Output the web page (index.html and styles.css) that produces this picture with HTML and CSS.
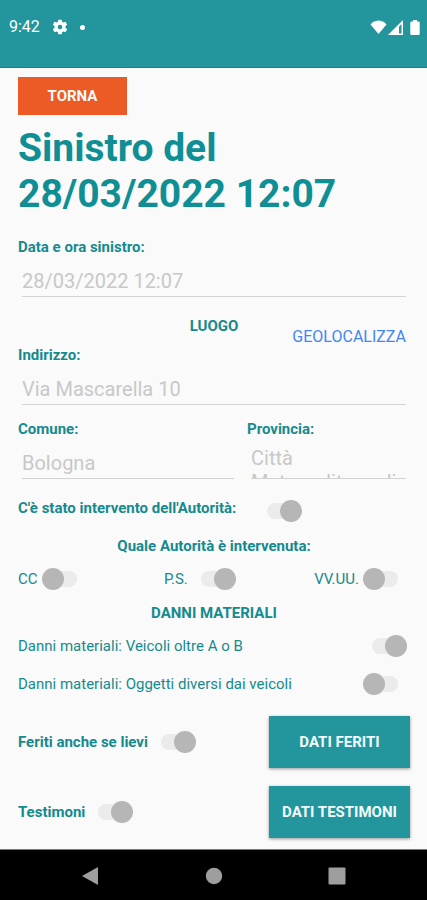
FILE: index.html
```html
<!DOCTYPE html>
<html lang="it">
<head>
    <meta charset="UTF-8">
    <meta name="viewport" content="width=device-width, initial-scale=1.0">
    <title>Sinistro del 28/03/2022 12:07</title>
    <link rel="stylesheet" href="styles.css">
</head>
<body>
    <header class="status-bar">
        <div class="status-left">
            <span>9:42</span>
            <svg width="16" height="16" viewBox="0 0 24 24" fill="#fff"><path d="M9.500 1h5l.6 3.300 1.900 1.100 3.200-1.200 2.500 4.400-2.600 2.100v2.600l2.600 2.100-2.500 4.400-3.200-1.200-1.900 1.100-.6 3.300h-5l-.6-3.300L7 18.600l-3.200 1.200-2.500-4.400 2.600-2.100v-2.600L1.300 8.600l2.500-4.400L7 5.400l1.900-1.100zM12 15.500a3.500 3.500 0 1 0 0-7 3.500 3.500 0 0 0 0 7z" fill-rule="evenodd"/></svg>
            <span class="dot"></span>
        </div>
        <div class="status-right">
            <svg width="17" height="14" viewBox="0 0 17 14" fill="#fff"><path d="M8.500 14 0.500 4.500Q1 3.500 3 2q5.500-3 11 0 2 1.500 2.500 2.500z"/></svg>
            <svg width="15" height="15" viewBox="0 0 15 15"><path d="M0 15 15 0v15z" fill="#fff"/><path d="M11 6.500 13.500 4v9.500H11z" fill="#22969c"/></svg>
            <svg class="battery" width="10" height="15" viewBox="0 0 10 15" fill="#fff"><path d="M3 0h4v1.500h1.500a1.200 1.200 0 0 1 1.200 1.200v11.100A1.200 1.200 0 0 1 8.500 15h-7a1.200 1.200 0 0 1-1.200-1.200V2.700a1.200 1.200 0 0 1 1.200-1.200H3z"/></svg>
        </div>
    </header>

    <main class="form">
        <button class="back-button" type="button">TORNA</button>
        <h1>Sinistro del 28/03/2022 12:07</h1>

        <div class="field">
            <label for="data">Data e ora sinistro:</label>
            <input type="text" id="data" value="28/03/2022 12:07">
        </div>

        <div class="place-header">
            <h2>LUOGO</h2>
            <a href="#">GEOLOCALIZZA</a>
        </div>

        <div class="field">
            <label for="indirizzo">Indirizzo:</label>
            <input type="text" id="indirizzo" value="Via Mascarella 10">
        </div>

        <div class="city-row">
            <div class="field">
                <label for="comune">Comune:</label>
                <input type="text" id="comune" value="Bologna">
            </div>
            <div class="field">
                <label for="provincia">Provincia:</label>
                <textarea id="provincia">Città Metropolitana di Bologna</textarea>
            </div>
        </div>

        <div class="authority">
            <label for="autorita">C'è stato intervento dell'Autorità:</label>
            <input class="switch" type="checkbox" id="autorita" checked>
        </div>

        <h2 class="authority-title">Quale Autorità è intervenuta:</h2>
        <div class="authority-list">
            <label class="option">CC <input class="switch" type="checkbox"></label>
            <label class="option">P.S. <input class="switch" type="checkbox" checked></label>
            <label class="option">VV.UU. <input class="switch" type="checkbox"></label>
        </div>

        <h2 class="damage-title">DANNI MATERIALI</h2>
        <div class="damage-list">
            <label class="option wide">Danni materiali: Veicoli oltre A o B <input class="switch" type="checkbox" checked></label>
            <label class="option wide">Danni materiali: Oggetti diversi dai veicoli <input class="switch" type="checkbox"></label>
        </div>

        <div class="people">
            <div class="people-row">
                <label class="option strong">Feriti anche se lievi <input class="switch" type="checkbox" checked></label>
                <button class="data-button" type="button">DATI FERITI</button>
            </div>
            <div class="people-row">
                <label class="option strong">Testimoni <input class="switch" type="checkbox" checked></label>
                <button class="data-button" type="button">DATI TESTIMONI</button>
            </div>
        </div>
    </main>

    <nav class="nav-bar">
        <button type="button" aria-label="Indietro"><svg width="18" height="18" viewBox="0 0 18 18" fill="#9e9e9e"><path d="M0 9 16 0v18z"/></svg></button>
        <button type="button" aria-label="Home"><svg width="18" height="18" viewBox="0 0 18 18" fill="#9e9e9e"><circle cx="9" cy="9" r="8.200"/></svg></button>
        <button type="button" aria-label="Recenti"><svg width="18" height="18" viewBox="0 0 18 18" fill="#9e9e9e"><rect x=".5" y=".5" width="17" height="17" rx="1"/></svg></button>
    </nav>
</body>
</html>
```
FILE: styles.css
```css
* {
    box-sizing: border-box;
}
body {
    display: flex;
    flex-direction: column;
    min-height: 100vh;
    margin: 0;
    font-family: Roboto, "Liberation Sans", sans-serif;
    font-size: 15px;
    line-height: 20px;
    color: #158a8e;
    background-color: #fafafa;
}
h1, h2 {
    margin: 0;
}
h1 {
    margin-bottom: 20px;
    font-size: 39px;
    font-weight: 700;
    line-height: 46px;
    color: #0f8f94;
}
h2 {
    font-size: 15px;
    font-weight: 700;
    text-align: center;
}
button {
    border: 0;
    padding: 0;
    font-family: inherit;
    font-size: 15px;
    font-weight: 700;
    color: #f4fbfb;
    cursor: pointer;
}

/* Android status bar */
.status-bar {
    display: flex;
    justify-content: space-between;
    height: 68px;
    padding: 17px 7px 0 9px;
    background-color: #22969c;
    border-bottom: 1px solid #15878c;
}
.status-left, .status-right {
    display: flex;
    align-items: center;
    height: 20px;
}
.status-left {
    gap: 12px;
    font-size: 16px;
    line-height: 20px;
    color: #fff;
}
.status-right {
    gap: 1px;
}
.battery {
    margin-left: 6px;
}
.dot {
    width: 5px;
    height: 5px;
    border-radius: 50%;
    background-color: #fff;
}

/* Form */
.form {
    flex: 1;
    padding: 9px 17px 11px 18px;
}
.back-button {
    display: block;
    width: 109px;
    height: 38px;
    margin-bottom: 10px;
    background-color: #ec5a25;
}
.field {
    display: flex;
    flex-direction: column;
    min-width: 0;
}
.field label {
    font-weight: 700;
}
.field input, .field textarea {
    height: 40px;
    margin: 0 4px;
    padding: 12px 0 3px;
    border: 0;
    border-bottom: 1px solid #d2d2d2;
    border-radius: 0;
    outline: 0;
    font-family: inherit;
    font-size: 20px;
    line-height: 24px;
    color: #c8c8c8;
    background-color: transparent;
}
.field input {
    min-width: 0;
}
.field textarea {
    padding: 7px 0 0;
    resize: none;
    overflow: hidden;
}
.place-header {
    display: grid;
    grid-template-columns: 1fr auto 1fr;
    height: 29px;
    margin-top: 19px;
}
.place-header h2 {
    grid-column: 2;
}
.place-header a {
    align-self: end;
    justify-self: end;
    margin-right: 4px;
    font-size: 16px;
    line-height: 16px;
    color: #4285f4;
    text-decoration: none;
}
.city-row {
    display: grid;
    grid-template-columns: 27fr 20fr;
    gap: 9px;
    margin-top: 14px;
}

/* Switches */
.switch {
    appearance: none;
    position: relative;
    flex: none;
    width: 44px;
    height: 22px;
    margin: 0;
}
.switch::before {
    content: "";
    position: absolute;
    top: 3px;
    left: 9px;
    width: 26px;
    height: 16px;
    border-radius: 8px;
    background-color: #ebebeb;
}
.switch::after {
    content: "";
    position: absolute;
    top: 0;
    left: 0;
    width: 22px;
    height: 22px;
    border-radius: 50%;
    background-color: #b6b6b6;
}
.switch:checked::after {
    left: auto;
    right: 0;
}
.option {
    display: flex;
    align-items: center;
    gap: 4px;
}
.wide {
    justify-content: space-between;
}
.strong, .authority label {
    font-weight: 700;
}
.authority {
    display: flex;
    align-items: flex-end;
    gap: 22px;
    margin-top: 19px;
}
.authority label {
    padding-bottom: 4px;
}
.authority-title {
    margin-top: 14px;
}
.authority-list {
    display: flex;
    justify-content: space-between;
    margin: 12px 3px 13px 0;
}
.damage-list {
    display: flex;
    flex-direction: column;
    gap: 16px;
    margin: 12px 3px 21px 0;
}
.people {
    display: flex;
    flex-direction: column;
    gap: 18px;
}
.people-row {
    display: flex;
    align-items: center;
    justify-content: space-between;
}
.data-button {
    width: 141px;
    height: 52px;
    background-color: #22969c;
    box-shadow: 0 1px 3px rgba(0, 0, 0, 0.4);
}

/* Android navigation bar */
.nav-bar {
    display: flex;
    align-items: center;
    justify-content: center;
    gap: 105px;
    height: 52px;
    background-color: #000;
    border-top: 1px solid #777;
}
.nav-bar button {
    display: flex;
    background: none;
}
```
